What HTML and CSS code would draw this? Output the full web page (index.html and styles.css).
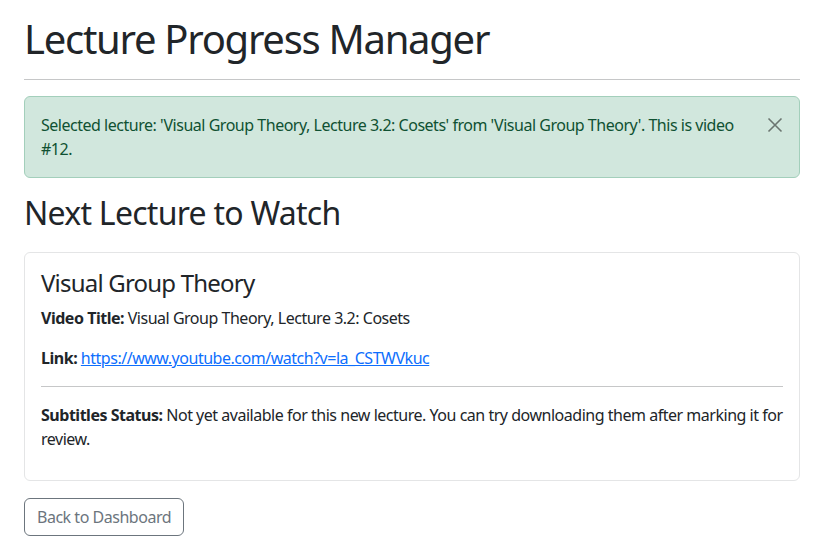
FILE: index.html
```html
<!DOCTYPE html>
<html lang="en">
<head>
<meta charset="utf-8">
<title>Lecture Progress Manager</title>
<link rel="stylesheet" href="styles.css">
</head>
<body>
<div class="container">
  <h1 class="page-title">Lecture Progress Manager</h1>
  <hr class="rule">
  <div class="alert">
    <span class="alert-text">Selected lecture: 'Visual Group Theory, Lecture 3.2: Cosets' from 'Visual Group Theory'. This is video #12.</span>
    <button class="close" type="button" aria-label="Close">
      <svg width="16" height="16" viewBox="0 0 16 16"><path d="M1.5 1.5 L14.5 14.5 M14.5 1.5 L1.5 14.5" stroke="#6b7570" stroke-width="1.6" fill="none"/></svg>
    </button>
  </div>
  <h2 class="section-title">Next Lecture to Watch</h2>
  <div class="card">
    <div class="card-body">
      <h4 class="card-title">Visual Group Theory</h4>
      <p class="line"><strong>Video Title:</strong> Visual Group Theory, Lecture 3.2: Cosets</p>
      <p class="line"><strong>Link:</strong> <a href="#">https://www.youtube.com/watch?v=la_CSTWVkuc</a></p>
      <hr class="rule">
      <p class="line last"><strong>Subtitles Status:</strong> Not yet available for this new lecture. You can try downloading them after marking it for review.</p>
    </div>
  </div>
  <a class="btn" href="#">Back to Dashboard</a>
</div>
</body>
</html>
```
FILE: styles.css
```css
* { box-sizing: border-box; }
body {
  margin: 0;
  font-family: "Noto Sans", sans-serif;
  font-size: 16px;
  line-height: 1.5;
  color: #212529;
  background: #fff;
  letter-spacing: -0.03em;
}
.container {
  padding: 15px 24px 0;
}
.page-title {
  font-size: 40px;
  font-weight: 400;
  line-height: 1.2;
  letter-spacing: -0.032em;
  margin: 0 0 8px;
}
.rule {
  border: 0;
  border-top: 1px solid #c6c7c8;
  margin: 16px 0;
}
.alert {
  position: relative;
  background: #d1e7dd;
  border: 1px solid #a3cfbb;
  color: #0f5132;
  border-radius: 6px;
  padding: 16px 48px 16px 16px;
  margin-bottom: 16px;
}
.close {
  position: absolute;
  top: 0;
  right: 0;
  padding: 20px 16px;
  background: none;
  border: 0;
  line-height: 0;
}
.section-title {
  font-size: 32px;
  font-weight: 400;
  line-height: 1.2;
  letter-spacing: -0.023em;
  margin: 0 0 20px;
}
.card {
  border: 1px solid #e4e5e6;
  border-radius: 6px;
}
.card-body {
  padding: 16px;
}
.card-title {
  font-size: 24px;
  font-weight: 400;
  line-height: 1.2;
  letter-spacing: -0.033em;
  margin: 0 0 8px;
}
.line { margin: 0 0 16px; }
.line.last { margin-bottom: 13px; }
strong { font-weight: 700; }
a { color: #0d6efd; }
.btn {
  display: inline-block;
  margin-top: 17px;
  padding: 6px 12px;
  border: 1px solid #6c757d;
  border-radius: 6px;
  color: #6c757d;
  text-decoration: none;
}
```
